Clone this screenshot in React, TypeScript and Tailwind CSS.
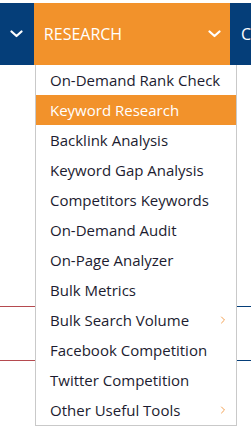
import { ChevronRight } from 'lucide-react'

const items = [
  { label: 'On-Demand Rank Check' },
  { label: 'Keyword Research', active: true },
  { label: 'Backlink Analysis' },
  { label: 'Keyword Gap Analysis' },
  { label: 'Competitors Keywords' },
  { label: 'On-Demand Audit' },
  { label: 'On-Page Analyzer' },
  { label: 'Bulk Metrics' },
  { label: 'Bulk Search Volume', sub: true },
  { label: 'Facebook Competition' },
  { label: 'Twitter Competition' },
  { label: 'Other Useful Tools', sub: true },
]

// Small white caret used in the nav bar.
const Caret = () => (
  <svg width="13" height="8" viewBox="0 0 13 8" fill="none">
    <path d="M1.5 1.5 L6.5 6 L11.5 1.5" stroke="white" strokeWidth="2.2" strokeLinecap="round" strokeLinejoin="round" />
  </svg>
)

export default function App() {
  return (
    <div className="relative h-[443px] w-[251px] overflow-hidden bg-white font-['Open_Sans',sans-serif]">
      <nav className="mt-[3px] flex h-[62px] bg-[#053e79] text-white">
        <div className="flex w-[35px] items-center justify-center">
          <Caret />
        </div>
        <div className="flex w-[202px] items-center justify-between bg-[#f2922b] pl-[10px] pr-[9px]">
          <span className="text-[16px]">RESEARCH</span>
          <Caret />
        </div>
        <div className="flex flex-1 items-center pl-[11px] text-[16px]">C</div>
      </nav>

      <div className="mt-[241px] flex h-[55px]">
        <div className="w-[35px] border-y border-[#b54a4f]" />
        <div className="w-[202px]" />
        <div className="flex-1 border-y border-[#053e79]" />
      </div>

      <ul className="absolute left-[35px] top-[65px] w-[202px] border border-t-0 border-[#c9c9c9] bg-white">
        {items.map((item) => (
          <li
            key={item.label}
            className={`flex h-[30px] items-center justify-between pl-[14px] pr-[7px] text-[15px] ${
              item.active ? 'bg-[#f2922b] text-white' : 'text-[#1c1c30]'
            }`}
          >
            <span>{item.label}</span>
            {item.sub && <ChevronRight size={12} strokeWidth={2} className="text-[#f4a050]" />}
          </li>
        ))}
      </ul>
    </div>
  )
}
